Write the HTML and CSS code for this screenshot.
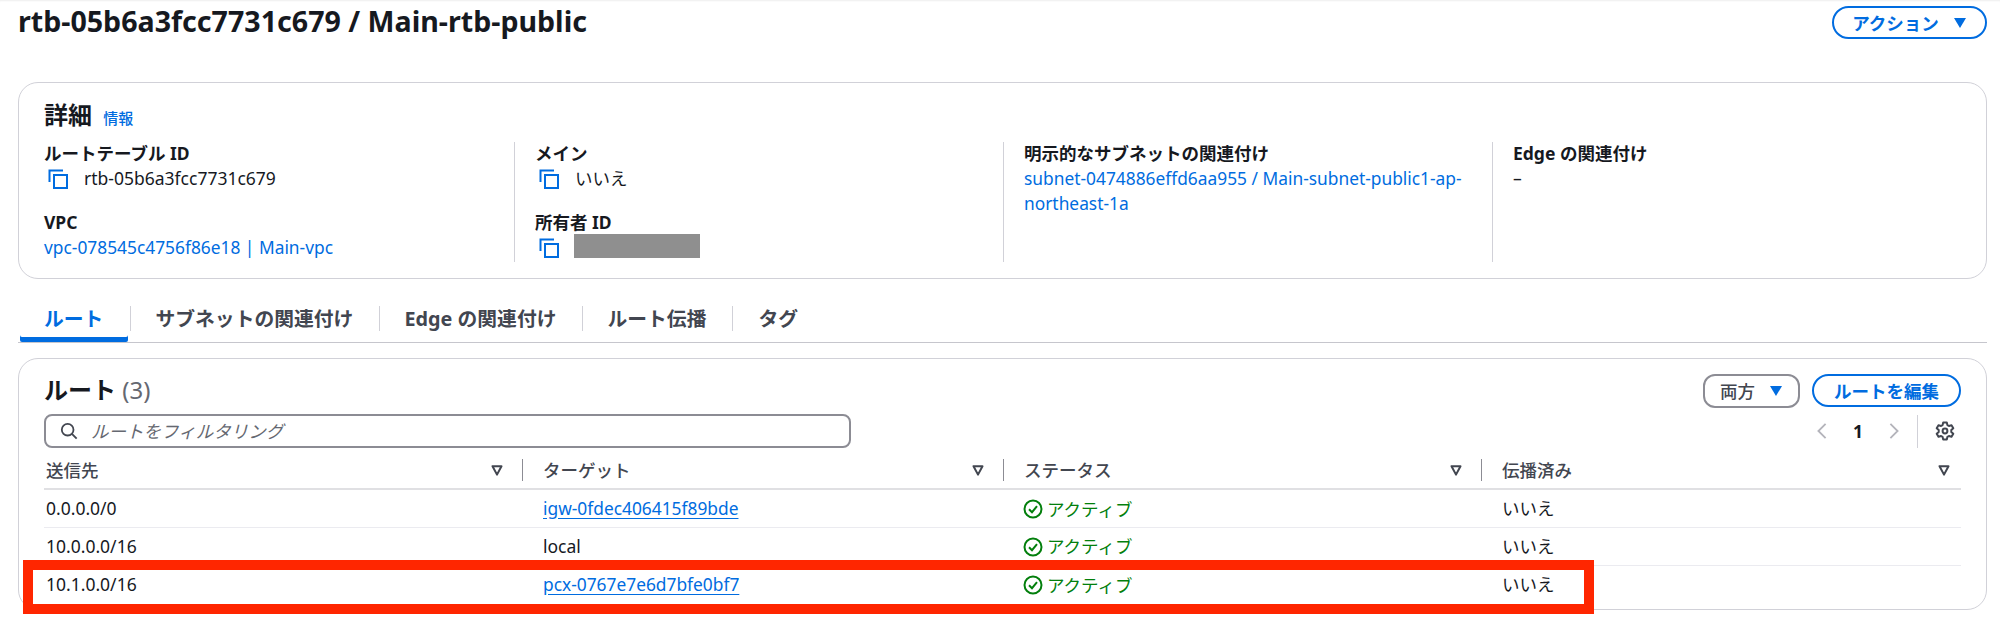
FILE: index.html
```html
<!DOCTYPE html>
<html lang="ja">
<head>
<meta charset="utf-8">
<title>rtb-05b6a3fcc7731c679 / Main-rtb-public</title>
<link rel="stylesheet" href="styles.css">
</head>
<body>
<svg class="sprite" width="0" height="0" aria-hidden="true">
  <symbol id="copy" viewBox="0 0 20 20"><path d="M1.5 13V1.5H15" fill="none" stroke="currentColor" stroke-width="2"/><rect x="6" y="6" width="13" height="13" fill="none" stroke="currentColor" stroke-width="2"/></symbol>
  <symbol id="caret" viewBox="0 0 14 12"><path d="M1 1h12L7 11z" fill="currentColor"/></symbol>
  <symbol id="filter" viewBox="0 0 12 11"><path d="M1.5 1.2h9L6 9.6z" fill="none" stroke="currentColor" stroke-width="2" stroke-linejoin="round"/></symbol>
  <symbol id="ok" viewBox="0 0 20 20"><circle cx="10" cy="10" r="8.5" fill="none" stroke="currentColor" stroke-width="2"/><path d="M6 10.2l3 3 5-6" fill="none" stroke="currentColor" stroke-width="2"/></symbol>
</svg>
<main class="page">
  <header class="top">
    <h1 class="title">rtb-05b6a3fcc7731c679 / Main-rtb-public</h1>
    <button class="btn btn-primary btn-action">アクション<svg class="caret"><use href="#caret"/></svg></button>
  </header>

  <section class="card details">
    <h2 class="card-title">詳細 <a class="info">情報</a></h2>
    <div class="detail-grid">
      <div class="col">
        <div class="field">
          <div class="label">ルートテーブル ID</div>
          <div class="value"><svg class="copy"><use href="#copy"/></svg>rtb-05b6a3fcc7731c679</div>
        </div>
        <div class="field">
          <div class="label">VPC</div>
          <div class="value"><a class="link">vpc-078545c4756f86e18 | Main-vpc</a></div>
        </div>
      </div>
      <div class="col col-sep">
        <div class="field">
          <div class="label">メイン</div>
          <div class="value"><svg class="copy"><use href="#copy"/></svg>いいえ</div>
        </div>
        <div class="field">
          <div class="label">所有者 ID</div>
          <div class="value"><svg class="copy"><use href="#copy"/></svg><span class="redact"></span></div>
        </div>
      </div>
      <div class="col col-sep">
        <div class="field">
          <div class="label">明示的なサブネットの関連付け</div>
          <div class="value wrap"><a class="link">subnet-0474886effd6aa955 / Main-subnet-public1-ap-northeast-1a</a></div>
        </div>
      </div>
      <div class="col col-sep">
        <div class="field">
          <div class="label">Edge の関連付け</div>
          <div class="value">–</div>
        </div>
      </div>
    </div>
  </section>

  <nav class="tabs">
    <a class="tab tab-active">ルート</a>
    <a class="tab tab-w2">サブネットの関連付け</a>
    <a class="tab tab-w3">Edge の関連付け</a>
    <a class="tab tab-w4">ルート伝播</a>
    <a class="tab tab-w5">タグ</a>
  </nav>

  <section class="card routes">
    <div class="routes-head">
      <h2 class="card-title routes-title">ルート <span class="count">(3)</span></h2>
      <div class="actions">
        <button class="btn btn-normal">両方<svg class="caret"><use href="#caret"/></svg></button>
        <button class="btn btn-primary btn-edit">ルートを編集</button>
      </div>
    </div>
    <div class="tools">
      <div class="search">
        <svg class="search-icon" viewBox="0 0 20 20"><circle cx="8.5" cy="8.5" r="6.5" fill="none" stroke="currentColor" stroke-width="2"/><path d="M13.5 13.5L18.5 18.5" stroke="currentColor" stroke-width="2"/></svg>
        <span class="placeholder">ルートをフィルタリング</span>
      </div>
      <div class="pager">
        <svg class="chev" viewBox="0 0 12 20"><path d="M10 2L2 10l8 8" fill="none" stroke="currentColor" stroke-width="2"/></svg>
        <span class="page-no">1</span>
        <svg class="chev" viewBox="0 0 12 20"><path d="M2 2l8 8-8 8" fill="none" stroke="currentColor" stroke-width="2"/></svg>
        <span class="pager-sep"></span>
        <svg class="gear" viewBox="0 0 20 20"><path d="M8.2 1.5h3.6l.6 2.6 1.5.9 2.6-.8 1.8 3.1-2 1.8v1.8l2 1.8-1.8 3.1-2.6-.8-1.5.9-.6 2.6H8.2l-.6-2.6-1.5-.9-2.6.8-1.8-3.1 2-1.8V9.1l-2-1.8 1.8-3.1 2.6.8 1.5-.9z" fill="none" stroke="currentColor" stroke-width="2" stroke-linejoin="round"/><circle cx="10" cy="10" r="2.4" fill="none" stroke="currentColor" stroke-width="2"/></svg>
      </div>
    </div>
    <table class="table">
      <thead>
        <tr>
          <th class="c1"><div class="th th-first">送信先<svg class="filter"><use href="#filter"/></svg></div></th>
          <th class="c2"><div class="th">ターゲット<svg class="filter"><use href="#filter"/></svg></div></th>
          <th class="c3"><div class="th">ステータス<svg class="filter"><use href="#filter"/></svg></div></th>
          <th class="c4"><div class="th th-last">伝播済み<svg class="filter"><use href="#filter"/></svg></div></th>
        </tr>
      </thead>
      <tbody>
        <tr>
          <td>0.0.0.0/0</td>
          <td><a class="link under">igw-0fdec406415f89bde</a></td>
          <td><span class="status"><svg class="ok"><use href="#ok"/></svg>アクティブ</span></td>
          <td>いいえ</td>
        </tr>
        <tr>
          <td>10.0.0.0/16</td>
          <td>local</td>
          <td><span class="status"><svg class="ok"><use href="#ok"/></svg>アクティブ</span></td>
          <td>いいえ</td>
        </tr>
        <tr>
          <td>10.1.0.0/16</td>
          <td><a class="link under">pcx-0767e7e6d7bfe0bf7</a></td>
          <td><span class="status"><svg class="ok"><use href="#ok"/></svg>アクティブ</span></td>
          <td>いいえ</td>
        </tr>
      </tbody>
    </table>
  </section>
  <div class="highlight"></div>
</main>
</body>
</html>
```
FILE: styles.css
```css
* { box-sizing: border-box; }
html, body { margin: 0; padding: 0; background: #fff; }
body {
  font-family: "Noto Sans", "Noto Sans CJK JP", sans-serif;
  font-size: 17.5px;
  line-height: 25px;
  color: #16191f;
  overflow: hidden;
  height: 640px;
}
.sprite { position: absolute; }
.page { position: relative; padding: 6px 13px 0 18px; box-shadow: inset 0 2px 2px -1px #eee; height: 640px; }
.top { display: flex; justify-content: space-between; align-items: flex-start; height: 33px; }
.title { margin: 0; margin-top: -3px; font-size: 28.6px; line-height: 36px; font-weight: 700; white-space: nowrap; }
.btn {
  font-family: inherit; font-weight: 700; font-size: 17.5px; line-height: 22px;
  background: #fff; border-radius: 17px; display: inline-flex; align-items: center; justify-content: center; padding: 0;
}
.btn-primary { color: #006ce0; border: 2px solid #006ce0; }
.btn-normal { color: #424650; border: 2px solid #8c8c94; border-radius: 12px; width: 97px; height: 34px; font-weight: 500; }
.btn-action { width: 155px; height: 33px; }
.btn-edit { width: 149px; height: 33px; }
.caret { width: 14px; height: 12px; margin-left: 14px; color: #006ce0; }
.card { border: 1.5px solid #d1d1d8; border-radius: 20px; background: #fff; }
.details { margin-top: 43px; height: 197px; padding: 19px 0 0 25px; }
.card-title { margin: 0; font-size: 24px; line-height: 26px; font-weight: 700; }
.info { font-size: 15px; font-weight: 500; color: #006ce0; margin-left: 5px; }
.detail-grid { display: grid; grid-template-columns: 470px 489px 489px 1fr; grid-template-rows: 120px; margin-top: 11px; }
.col-sep { border-left: 1px solid #d1d1d8; padding-left: 20px; }
.field { height: 70px; }
.field + .field { height: 50px; }
.label { font-weight: 700; line-height: 25px; margin-top: -1px; }
.value { display: flex; align-items: center; min-height: 25px; color: #16191f; }
.wrap { width: 445px; }
.copy { width: 20px; height: 20px; margin-left: 4px; margin-right: 16px; color: #006ce0; flex: none; }
.redact { display: block; width: 126px; height: 24px; background: #8f8f8f; margin-left: -1px; margin-top: -3px; }
.link { color: #006ce0; font-size: 17.35px; }
.under { text-decoration: underline; text-underline-offset: 3px; }
.tabs { display: flex; margin-top: 27px; height: 37px; border-bottom: 1.5px solid #c6c6cd; align-items: flex-start; }
.tab { display: block; height: 25px; font-size: 19.8px; font-weight: 700; color: #424650; line-height: 25px; border-right: 1px solid #d1d1d8; padding-left: 25px; white-space: nowrap; }
.tab-active { margin-left: 2px; width: 108px; color: #006ce0; height: 36px; border-right: 0; box-shadow: inset 0 -5px 0 #006ce0; border-radius: 0 0 2px 2px; padding-left: 24px; margin-right: 1.5px; }
.tab-w2 { width: 250px; border-left: 1px solid #d1d1d8; }
.tab-w3 { width: 203px; }
.tab-w4 { width: 150px; }
.tab-w5 { border-right: 0; padding-left: 26px; }
.routes { margin-top: 15px; height: 252px; padding: 15px 25px 0 25px; }
.routes-head { display: flex; justify-content: space-between; height: 40px; }
.routes-title { padding-top: 2px; line-height: 28px; }
.count { font-weight: 400; color: #656871; }
.actions { display: flex; gap: 12px; }
.tools { display: flex; justify-content: space-between; height: 34px; }
.search { width: 807px; height: 34px; border: 2px solid #8c8c94; border-radius: 8px; display: flex; align-items: center; padding-left: 14px; }
.search-icon { width: 18px; height: 18px; color: #424650; }
.placeholder { font-style: italic; color: #656871; margin-left: 13px; }
.pager { display: flex; align-items: center; margin-right: 6px; }
.chev { width: 12px; height: 18px; color: #b4b4bb; }
.page-no { font-weight: 700; width: 60px; text-align: center; }
.pager-sep { width: 1px; height: 33px; background: #d1d1d8; margin-left: 17px; margin-right: 17px; }
.gear { width: 20px; height: 20px; color: #424650; }
.table { width: 1917px; border-collapse: collapse; table-layout: fixed; margin-top: 3px; }
.c1 { width: 478px; } .c2 { width: 481px; } .c3 { width: 478px; } .c4 { width: 480px; }
th { padding: 8px 0 7px; font-weight: 500; text-align: left; border-bottom: 2px solid #e0e0e3; color: #424650; }
.th { display: flex; justify-content: space-between; align-items: center; height: 22px; border-left: 1px solid #8c8c94; padding-left: 20px; padding-right: 19px; line-height: 22px; }
.th-first { border-left: 0; padding-left: 2px; }
.th-last { padding-right: 11px; }
.filter { width: 12px; height: 11px; color: #424650; }
td { padding: 0 0 0 21px; height: 38px; border-bottom: 1.5px solid #ebebf0; white-space: nowrap; }
td:first-child { padding-left: 2px; }
tbody tr:last-child td { border-bottom: 0; }
.status { display: inline-flex; align-items: center; color: #037f0c; vertical-align: middle; }
.ok { width: 20px; height: 20px; margin-right: 4px; margin-left: -1px; }
.highlight { position: absolute; left: 23px; top: 560px; width: 1571px; height: 54px; border: 10px solid #ff2600; }
```
